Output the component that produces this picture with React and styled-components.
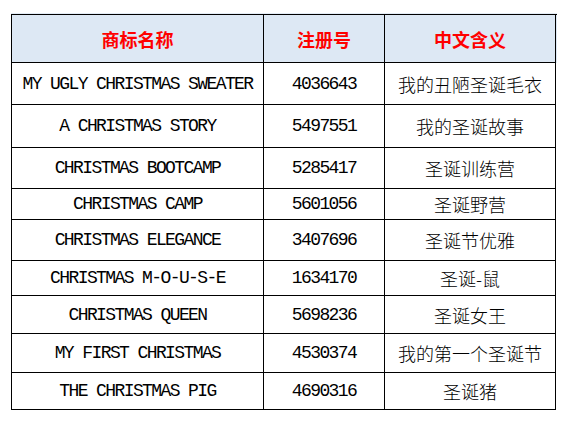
import React from 'react';
import styled, { createGlobalStyle } from 'styled-components';

const GlobalStyle = createGlobalStyle`
  body {
    margin: 0;
    background: #ffffff;
  }
`;

const Page = styled.div`
  padding: 14px 0 0 11px;
`;

const Table = styled.div`
  width: 545px;
  border-left: 1px solid #000;
  border-top: 1px solid #000;
  box-shadow: 0 -1px 0 #e3ecf6;
`;

const Row = styled.div`
  display: grid;
  grid-template-columns: 252px 121px 171px;
  height: ${(p) => p.$h}px;
  background: ${(p) => (p.$head ? '#dde8f4' : '#ffffff')};
`;

const Cell = styled.div`
  display: flex;
  align-items: center;
  justify-content: center;
  border-right: 1px solid #000;
  border-bottom: 1px solid #000;
  white-space: nowrap;
  color: #000;
  font-size: 18px;
  font-weight: ${(p) => (p.$mono ? 400 : 300)};
  font-family: ${(p) =>
    p.$mono
      ? '"Liberation Mono", monospace'
      : '"Noto Sans CJK SC", "Noto Sans", sans-serif'};
  letter-spacing: ${(p) => (p.$mono ? '-1.6px' : '0')};
`;

const HeadCell = styled(Cell)`
  color: #ff0000;
  font-weight: 700;
  font-family: "Noto Sans CJK SC", sans-serif;
  letter-spacing: 0;
`;

const rows = [
  { name: 'MY UGLY CHRISTMAS SWEATER', no: '4036643', cn: '我的丑陋圣诞毛衣', h: 42 },
  { name: 'A CHRISTMAS STORY', no: '5497551', cn: '我的圣诞故事', h: 43 },
  { name: 'CHRISTMAS BOOTCAMP', no: '5285417', cn: '圣诞训练营', h: 41 },
  { name: 'CHRISTMAS CAMP', no: '5601056', cn: '圣诞野营', h: 31 },
  { name: 'CHRISTMAS ELEGANCE', no: '3407696', cn: '圣诞节优雅', h: 41 },
  { name: 'CHRISTMAS M-O-U-S-E', no: '1634170', cn: '圣诞-鼠', h: 35 },
  { name: 'CHRISTMAS QUEEN', no: '5698236', cn: '圣诞女王', h: 38 },
  { name: 'MY FIRST CHRISTMAS', no: '4530374', cn: '我的第一个圣诞节', h: 39 },
  { name: 'THE CHRISTMAS PIG', no: '4690316', cn: '圣诞猪', h: 37 },
];

const App = () => {
  return (
    <Page>
      <GlobalStyle />
      <Table>
        <Row $h={48} $head>
          <HeadCell>商标名称</HeadCell>
          <HeadCell>注册号</HeadCell>
          <HeadCell>中文含义</HeadCell>
        </Row>
        {rows.map((r) => (
          <Row key={r.no} $h={r.h}>
            <Cell $mono>{r.name}</Cell>
            <Cell $mono>{r.no}</Cell>
            <Cell>{r.cn}</Cell>
          </Row>
        ))}
      </Table>
    </Page>
  );
};

export default App;
